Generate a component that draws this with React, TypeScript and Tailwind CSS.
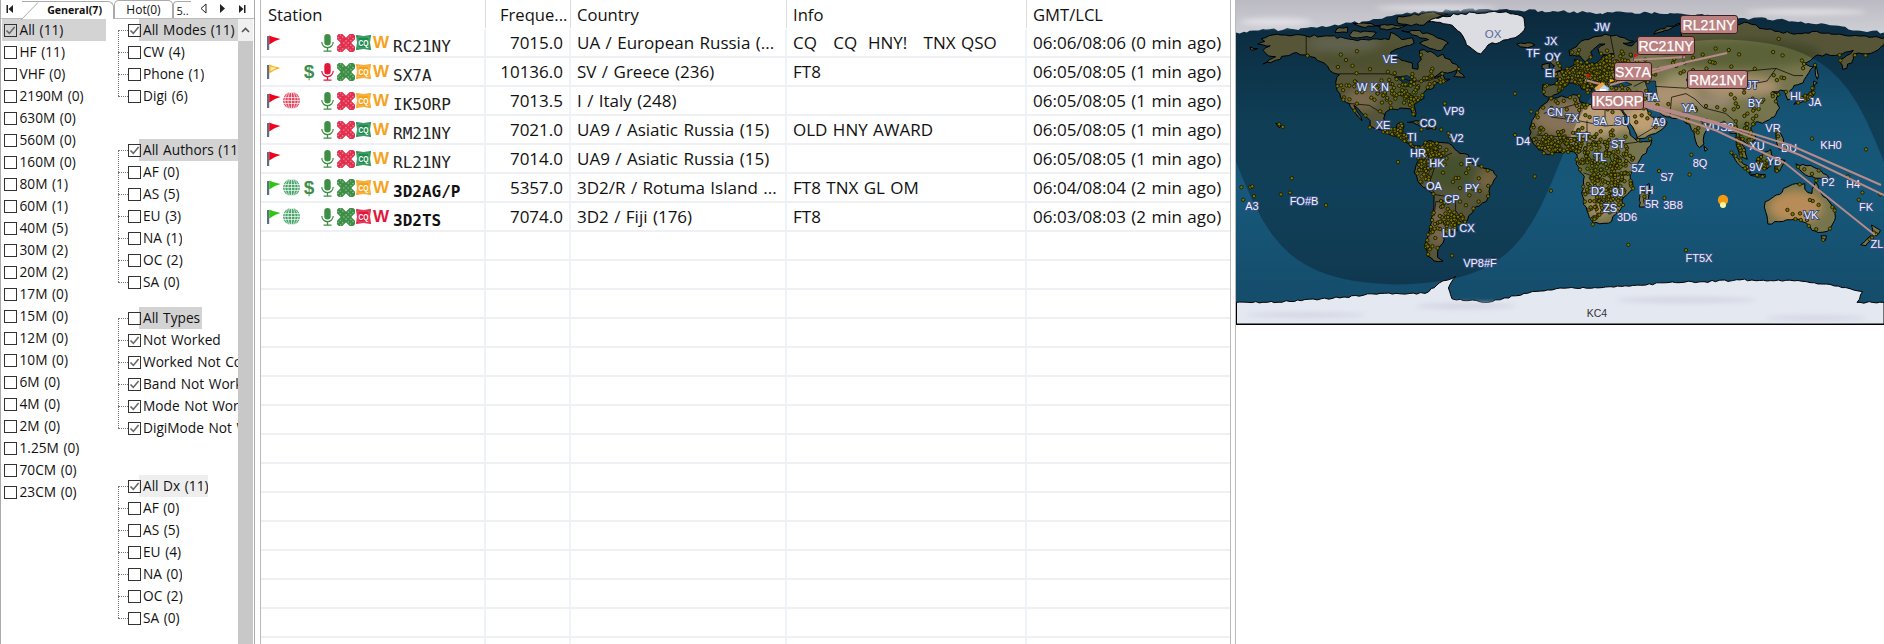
import React from "react";

type C = { l: string; n?: boolean; h?: string };

function Box({ on }: { on?: boolean }) {
  return (
    <span className="relative z-10 flex h-[13px] w-[13px] shrink-0 items-center justify-center border border-[#333]">
      {on && (
        <svg width="11" height="11" viewBox="0 0 11 11">
          <path d="M1.5 5.5 L4.3 8.4 L9.6 2" fill="none" stroke="#666" strokeWidth="1.6" />
        </svg>
      )}
    </span>
  );
}

const bands = ["HF (11)", "VHF (0)", "2190M (0)", "630M (0)", "560M (0)", "160M (0)", "80M (1)", "60M (1)", "40M (5)", "30M (2)", "20M (2)", "17M (0)", "15M (0)", "12M (0)", "10M (0)", "6M (0)", "4M (0)", "2M (0)", "1.25M (0)", "70CM (0)", "23CM (0)"];

function Group({ items, className }: { items: C[]; className: string }) {
  return (
    <div className={"relative " + className}>
      <div className="absolute bottom-[11px] left-0 top-[11px] border-l border-dotted border-[#777]" />
      {items.map((it, i) => (
        <div key={i} className="flex h-[22px] items-center">
          <span className="w-[10px] shrink-0 border-t border-dotted border-[#777]" />
          <Box on={it.n} />
          <span className={"-ml-[2px] flex h-[22px] items-center overflow-hidden whitespace-nowrap pl-[4px] " + (it.h ?? "")}>{it.l}</span>
        </div>
      ))}
    </div>
  );
}

function LeftPanel() {
  return (
    <div className="flex h-[644px] w-[255px] shrink-0 flex-col border-x border-x-[#aaa] text-[13.7px] leading-none text-[#111] [word-spacing:1px]">
      <div className="relative flex h-[19px] shrink-0 items-end border-b border-[#bbb] text-[12px]">
        <span className="flex h-[19px] w-[21px] items-center pl-[5px] text-[#111]">
          <svg width="8" height="10" viewBox="0 0 8 10"><rect x="0.5" y="1" width="1.5" height="8" fill="#222" /><path d="M7 1 V9 L2.5 5Z" fill="#222" /></svg>
        </span>
        <div className="relative -mb-px flex h-[18px] w-[92px] items-center justify-end rounded-tr-[6px] border-r border-t border-[#aaa] bg-white pr-[11px] font-bold">
          <span className="text-[10.6px]">General(7)</span>
          <svg className="absolute -left-[1px] top-0" width="18" height="18" viewBox="0 0 18 18"><path d="M0 18 L17 0.5" stroke="#aaa" fill="none" /></svg>
        </div>
        <div className="flex h-[18px] w-[59px] items-center justify-center rounded-t-[5px] border-x border-t border-[#aaa] text-[12px]">Hot(0)</div>
        <div className="flex h-[17px] w-[18px] items-center justify-center overflow-hidden rounded-tl-[4px] border-l border-t border-[#aaa] text-[11px]">5..</div>
        <span className="ml-[9px] flex h-[19px] w-[19px] items-center">
          <svg width="7" height="11" viewBox="0 0 7 11"><path d="M6 1 V10 L1 5.5Z" fill="none" stroke="#222" /></svg>
        </span>
        <span className="flex h-[19px] w-[19px] items-center">
          <svg width="7" height="11" viewBox="0 0 7 11"><path d="M1 1 V10 L6 5.5Z" fill="#222" /></svg>
        </span>
        <span className="flex h-[19px] items-center">
          <svg width="8" height="10" viewBox="0 0 8 10"><path d="M1 1 V9 L5.5 5Z" fill="#222" /><rect x="6" y="1" width="1.5" height="8" fill="#222" /></svg>
        </span>
      </div>
      <div className="flex min-h-0 flex-1">
        <div className="w-[117px] shrink-0 pl-[1px]">
          <div className="flex h-[22px] w-[104px] items-center gap-[2.5px] bg-[#d3d3d3] pl-[2px]">
            <Box on />
            <span>All (11)</span>
          </div>
          {bands.map((b) => (
            <div key={b} className="flex h-[22px] items-center gap-[2.5px] pl-[2px]">
              <Box />
              <span>{b}</span>
            </div>
          ))}
        </div>
        <div className="w-[120px] shrink-0 overflow-hidden">
          <Group className="" items={[{ l: "All Modes (11)", n: true, h: "w-[99px] bg-[#d3d3d3]" }, { l: "CW (4)" }, { l: "Phone (1)" }, { l: "Digi (6)" }]} />
          <Group className="mt-[32px]" items={[{ l: "All Authors (11)", n: true, h: "bg-[#d3d3d3] w-[101px]" }, { l: "AF (0)" }, { l: "AS (5)" }, { l: "EU (3)" }, { l: "NA (1)" }, { l: "OC (2)" }, { l: "SA (0)" }]} />
          <Group className="mt-[14px]" items={[{ l: "All Types", h: "bg-[#d3d3d3] w-[63px]" }, { l: "Not Worked", n: true }, { l: "Worked Not Confirmed", n: true }, { l: "Band Not Worked", n: true }, { l: "Mode Not Worked", n: true }, { l: "DigiMode Not Worked", n: true }]} />
          <Group className="mt-[36px]" items={[{ l: "All Dx (11)", n: true, h: "w-[69px] bg-[#eeeeee]" }, { l: "AF (0)" }, { l: "AS (5)" }, { l: "EU (4)" }, { l: "NA (0)" }, { l: "OC (2)" }, { l: "SA (0)" }]} />
        </div>
        <div className="flex w-[15px] shrink-0 flex-col bg-[#c8c8c8]">
          <div className="flex h-[22px] items-center justify-center bg-[#f0f0f0]">
            <svg width="9" height="6" viewBox="0 0 9 6"><path d="M1 5 L4.5 1.5 L8 5" fill="none" stroke="#555" strokeWidth="1.6" /></svg>
          </div>
        </div>
      </div>
    </div>
  );
}

const RED = "#e2304f";
const GRN = "#3d8f45";
const ORG = "#f5a31f";
const CRIM = "#e0183c";

function Flag({ c }: { c: "r" | "y" | "g" }) {
  const col = c === "r" ? "#f2001c" : c === "y" ? "#fbb017" : "#2fc414";
  return (
    <svg width="14" height="15" viewBox="0 0 14 15" className="-mt-[1px]">
      <rect x="0" y="1" width="2.2" height="14" fill="#5d6f82" />
      <path d="M2.2 0.5 L6 2 L13.5 4 L8 6 L2.2 9.5Z" fill={col} />
      {c === "y" && <path d="M3.5 2.5 L9.5 4 L5 6.5 L3.5 7Z" fill="#ffeeb0" />}
    </svg>
  );
}
function Globe({ c }: { c: string }) {
  return (
    <svg width="17" height="17" viewBox="0 0 17 17">
      <circle cx="8.5" cy="8.5" r="8.5" fill={c} />
      <g stroke="#fff" strokeOpacity="0.75" strokeWidth="0.9" fill="none">
        <path d="M0 5.5 H17 M0 8.5 H17 M0 11.5 H17" />
        <ellipse cx="8.5" cy="8.5" rx="3.5" ry="8.5" />
        <path d="M8.5 0 V17" />
        <ellipse cx="8.5" cy="8.5" rx="6.6" ry="8.5" />
      </g>
    </svg>
  );
}
function Mic({ c }: { c: string }) {
  return (
    <svg width="13" height="18" viewBox="0 0 13 18">
      <rect x="3.3" y="0" width="6.4" height="11.5" rx="3.2" fill={c} />
      <path d="M0.8 8 A5.7 5.7 0 0 0 12.2 8" fill="none" stroke={c} strokeWidth="1.2" />
      <path d="M6.5 13.5 V16.5 M2.5 17.2 H10.5" stroke={c} strokeWidth="1.3" fill="none" />
    </svg>
  );
}
function Cross({ c }: { c: string }) {
  const bar = (r: number) => (
    <g transform={`rotate(${r} 9 9)`}>
      <rect x="-2.5" y="5.2" width="23" height="7.6" rx="1.5" fill={c} />
      <g fill="#fff" fillOpacity="0.5">
        {[-1, 2, 13.5, 16.5].map((x) => (
          <g key={x}>
            <rect x={x} y="6.6" width="1.2" height="1.2" />
            <rect x={x} y="10.2" width="1.2" height="1.2" />
          </g>
        ))}
      </g>
    </g>
  );
  return (
    <svg width="18" height="18" viewBox="0 0 18 18">
      {bar(45)}
      {bar(-45)}
      <g fill="#fff" fillOpacity="0.5">
        <rect x="8.4" y="6.2" width="1.2" height="1.2" />
        <rect x="8.4" y="10.6" width="1.2" height="1.2" />
        <rect x="6.2" y="8.4" width="1.2" height="1.2" />
        <rect x="10.6" y="8.4" width="1.2" height="1.2" />
      </g>
    </svg>
  );
}
function Cq({ c }: { c: string }) {
  return (
    <svg width="15" height="15" viewBox="0 0 15 15">
      <path d="M0 0 L7.5 1 L15 0 L14 7.5 L15 15 L7.5 14 L0 15 L1 7.5Z" fill={c} />
      <rect x="2" y="2" width="11" height="11" fill={c} stroke="#fff" strokeOpacity="0.45" strokeWidth="0.6" />
      <text x="7.5" y="11" textAnchor="middle" fontSize="9" fontWeight="700" fill="#fff" fontFamily="'Liberation Sans',sans-serif" textLength="10" lengthAdjust="spacingAndGlyphs">CQ</text>
    </svg>
  );
}

type Row = { flag: "r" | "y" | "g"; globe?: string; dollar?: boolean; mic: string; x: string; cq: string; w: string; call: string; bold?: boolean; f: string; country: string; info: string; t: string };
const DARKG = "#1e8a4c";
const rows: Row[] = [
  { flag: "r", mic: GRN, x: RED, cq: DARKG, w: ORG, call: "RC21NY", f: "7015.0", country: "UA / European Russia (...", info: "CQ   CQ  HNY!   TNX QSO", t: "06:06/08:06 (0 min ago)" },
  { flag: "y", dollar: true, mic: CRIM, x: GRN, cq: ORG, w: ORG, call: "SX7A", f: "10136.0", country: "SV / Greece (236)", info: "FT8", t: "06:05/08:05 (1 min ago)" },
  { flag: "r", globe: "#e24a62", mic: GRN, x: RED, cq: ORG, w: ORG, call: "IK5ORP", f: "7013.5", country: "I / Italy (248)", info: "", t: "06:05/08:05 (1 min ago)" },
  { flag: "r", mic: GRN, x: RED, cq: DARKG, w: ORG, call: "RM21NY", f: "7021.0", country: "UA9 / Asiatic Russia (15)", info: "OLD HNY AWARD", t: "06:05/08:05 (1 min ago)" },
  { flag: "r", mic: GRN, x: RED, cq: DARKG, w: ORG, call: "RL21NY", f: "7014.0", country: "UA9 / Asiatic Russia (15)", info: "", t: "06:05/08:05 (1 min ago)" },
  { flag: "g", globe: "#4aa56b", dollar: true, mic: GRN, x: GRN, cq: ORG, w: ORG, call: "3D2AG/P", bold: true, f: "5357.0", country: "3D2/R / Rotuma Island ...", info: "FT8 TNX GL OM", t: "06:04/08:04 (2 min ago)" },
  { flag: "g", globe: "#4aa56b", mic: GRN, x: GRN, cq: CRIM, w: CRIM, call: "3D2TS", bold: true, f: "7074.0", country: "3D2 / Fiji (176)", info: "FT8", t: "06:03/08:03 (2 min ago)" },
];

const cs = "shrink-0 overflow-hidden whitespace-nowrap border-r-2 border-[#eef3fa] flex items-center";
const hs = "shrink-0 flex h-[28px] items-center border-r border-[#dcdcdc] whitespace-nowrap pt-[2px]";

function Table() {
  const empties = Array.from({ length: 15 });
  return (
    <div className="h-[644px] w-[971px] shrink-0 overflow-hidden border-x border-[#bbb] text-[17px] leading-none text-[#111] [word-spacing:1px]">
      <div className="flex h-[29px] text-[16.6px]">
        <div className={hs + " w-[225px] pl-[7px]"}>Station</div>
        <div className={hs + " w-[85px] pl-[14px]"}>Freque...</div>
        <div className={hs + " w-[216px] pl-[6px]"}>Country</div>
        <div className={hs + " w-[240px] pl-[6px]"}>Info</div>
        <div className="flex h-[28px] w-[202px] items-center pl-[6px] pt-[2px]">GMT/LCL</div>
      </div>
      {rows.map((r) => (
        <div key={r.call} className="flex h-[29px] border-b-2 border-[#eef0f3]">
          <div className={cs + " w-[225px] pl-[6px]"}>
            <span className="flex w-[15px] shrink-0 justify-start"><Flag c={r.flag} /></span>
            <span className="flex w-[18px] shrink-0 justify-center">{r.globe && <Globe c={r.globe} />}</span>
            <span className="flex w-[18px] shrink-0 justify-center font-['Liberation_Sans'] text-[19px] font-bold text-[#3f8f4a]">{r.dollar && "$"}</span>
            <span className="flex w-[18px] shrink-0 justify-center"><Mic c={r.mic} /></span>
            <span className="flex w-[19px] shrink-0 justify-center"><Cross c={r.x} /></span>
            <span className="flex w-[17px] shrink-0 justify-center"><Cq c={r.cq} /></span>
            <span className="flex w-[18px] shrink-0 justify-center font-['Liberation_Sans'] text-[17px] font-bold" style={{ color: r.w }}>W</span>
            <span className={"ml-[3px] mt-[8px] font-['DejaVu_Sans_Mono'] text-[16px] " + (r.bold ? "font-bold" : "font-normal text-[#222]")}>{r.call}</span>
          </div>
          <div className={cs + " w-[85px] justify-end pr-[6px]"}>{r.f}</div>
          <div className={cs + " w-[216px] pl-[6px]"}>{r.country}</div>
          <div className={cs + " w-[240px] whitespace-pre pl-[6px]"}>{r.info}</div>
          <div className="flex w-[202px] items-center pl-[6px]">{r.t}</div>
        </div>
      ))}
      {empties.map((_, i) => (
        <div key={i} className="flex h-[29px] border-b-2 border-[#eef0f3]">
          <div className={cs + " w-[225px]"} />
          <div className={cs + " w-[85px]"} />
          <div className={cs + " w-[216px]"} />
          <div className={cs + " w-[240px]"} />
        </div>
      ))}
    </div>
  );
}

/* ---------- Map ---------- */
type LL = [number, number];
const X = (lon: number) => (lon + 180) * 1.8;
const Y = (lat: number) => 162 - lat * 1.8;
const path = (p: LL[], close = true) => "M" + p.map(([a, b]) => X(a).toFixed(1) + " " + Y(b).toFixed(1)).join("L") + (close ? "Z" : "");

function rng(seed: number) {
  let s = seed;
  return () => {
    s = (s + 0x6d2b79f5) | 0;
    let t = Math.imul(s ^ (s >>> 15), 1 | s);
    t = (t + Math.imul(t ^ (t >>> 7), 61 | t)) ^ t;
    return ((t ^ (t >>> 14)) >>> 0) / 4294967296;
  };
}

const land: LL[][] = [
  [[-168,65.5],[-164,67],[-166,68.5],[-157,71],[-141,70],[-128,70],[-115,68],[-108,68],[-95,68],[-94,72],[-88,68],[-82,69],[-81,66],[-87,64],[-94,61],[-94,58.5],[-88,56.5],[-82,55],[-82,52],[-79,51.5],[-79,55],[-77,57],[-78,62],[-72,61.5],[-68,58.5],[-65,60],[-60,55],[-56,52],[-60,50],[-66,50],[-70,47],[-65,48.5],[-64,46],[-61,46],[-66,44],[-70,43.5],[-70,41.5],[-74,40.5],[-76,38],[-75.5,35.5],[-78,34],[-81,32],[-80,27],[-80.5,25],[-82,27],[-83,29.5],[-85,29.7],[-89,30],[-90,29],[-94,29.5],[-97,27.5],[-97.5,22],[-95,18.5],[-91,18.5],[-90.5,21],[-87,21.5],[-88,16],[-83.5,15],[-83.5,11],[-81,9],[-78,9],[-77.5,7.5],[-80,7.5],[-83,8.5],[-86,11],[-88,13],[-92,14.5],[-96,16],[-102,18],[-105.5,20],[-105.5,23],[-109,26],[-112.5,30],[-114.5,31.5],[-112,27],[-110,23],[-112,25],[-115,29],[-117,32.5],[-120.5,34.5],[-124,40],[-124,47],[-122.5,48.5],[-128,51],[-131,55],[-136,58],[-140,60],[-148,60.5],[-152,59],[-158,56.5],[-165,54.5],[-158,58.5],[-162,59],[-165,62],[-161,64.5]],
  [[-80,73],[-72,71],[-62,66],[-66,62],[-74,64],[-78,66],[-73,68],[-88,73]],
  [[-117,70],[-105,69],[-102,72],[-115,73]],
  [[-90,77],[-78,76],[-62,82],[-72,83],[-90,81]],
  [[-125,72],[-118,72],[-118,75],[-124,74]],
  [[-100,74],[-90,74],[-85,76],[-100,76]],
  [[-110,75],[-100,75.5],[-105,77],[-115,77]],
  [[-57,51.5],[-53,47],[-59,47.5]],
  [[-24,65.5],[-18,66.3],[-14,65],[-18,63.5],[-22,64]],
  [[-85,22],[-80,23],[-74.5,20],[-78,20],[-82,22]],
  [[-74,19.5],[-69,19.5],[-69,18.2],[-74,18.2]],
  [[-77.5,7.5],[-75,11],[-72,12],[-68,11],[-62,10.5],[-57,6],[-51,4],[-50,0],[-44,-2.5],[-37,-5],[-35,-8],[-39,-14],[-39,-18],[-41,-22],[-48,-26],[-48.5,-28],[-53,-34],[-58,-34.5],[-57,-38],[-62,-39],[-65,-41],[-65,-45],[-68,-50],[-68,-53],[-65,-55],[-70,-55],[-74,-52],[-75,-46],[-73,-40],[-71,-30],[-70,-18],[-76,-14],[-81,-6],[-80,-2],[-78,2]],
  [[-6,35.5],[10,37],[11,33.5],[20,31],[25,32],[32,31],[34.5,28],[37,21],[39,15],[43,11.5],[51,12],[48,5],[41,-2],[39,-7],[40.5,-15],[35,-20],[35,-24],[32.5,-28],[27,-34],[18.5,-34],[15,-27],[12,-17],[13.5,-8],[9,-1],[9.5,4],[5,6],[-4,5],[-8,4.5],[-13,8.5],[-17,14.5],[-16,21],[-13,27.5],[-9,32]],
  [[49.5,-12],[50.5,-16],[47,-25],[44,-25],[44,-17]],
  [[-9,37],[-9.5,43],[-2,43.5],[-1,46],[-4.5,48.5],[1.5,50.5],[4,52],[8,54],[8,57],[11,56],[11,54],[20,54.5],[24,59],[30,60],[22,60],[21,63],[25,65.5],[22,65.5],[17,61],[18,59],[14,55.5],[11,59],[5.5,59],[5,62],[14,68],[25,71],[33,69.5],[41,67],[35,66],[40,64.5],[44,68],[55,68.5],[68,68.5],[67,72.5],[73,72],[80,73],[87,75],[104,77.5],[113,74],[130,71],[140,72.5],[160,70],[170,70],[180,69],[180,65],[177,62.5],[170,60],[163,60],[162,55],[157,51.5],[155.5,57],[163,62],[155,59.5],[143,59.5],[135,54.5],[141,53],[135,44],[130,42.5],[127.5,39.5],[129.5,36],[126.5,34.5],[125,39.5],[121,39],[118,39],[122,37],[120,34],[122,30],[119,25],[114,22.5],[108,21.5],[106,19],[109,13],[105,9],[100,13.5],[103,5],[104,1.5],[100.5,3],[98,9],[98,16],[94.5,16],[92,21.5],[87,21.5],[80,15],[80,10],[77.5,8],[73,18],[72,21],[67,24.5],[61,25],[57,26],[51,30],[48,30],[51,25],[56,25],[59.5,22],[55,17],[45,13],[43,13],[39,21],[35,28],[35,36],[27,36.5],[26,40],[23,40],[23,36.5],[20,40],[13,45.5],[18,40],[15.5,38],[9,44],[3,43],[-1,38],[-5,36]],
  [[-5,50],[1,51],[0,54],[-3,58.5],[-6,56],[-3,53.5]],
  [[-10,52],[-6,52],[-6,55],[-10,54]],
  [[130,32],[136,34],[141,37],[141,41],[143,44],[141,45],[139,38],[132,35]],
  [[95,5.5],[104,-2],[106,-6],[101,-3]],
  [[105,-6.5],[114,-7],[114,-8.5],[106,-7.5]],
  [[109,1],[117,7],[118,1],[115,-4],[110,-3]],
  [[119,1],[125,1],[122,-5],[120,-5]],
  [[131,-1],[141,-3],[148,-7],[150,-10],[142,-9],[138,-8],[133,-4]],
  [[120,18],[122,18],[124,13],[126,7],[122,7],[120,14]],
  [[80,9],[82,7],[80.5,6]],
  [[114,-22],[122,-18],[126,-14],[131,-12],[136,-12],[136,-15],[140,-17.5],[142,-11],[146,-19],[153,-26],[153,-31],[150,-37],[146,-39],[140,-38],[137,-34],[131,-31.5],[124,-33],[115.5,-34.5],[115,-30],[113.5,-25]],
  [[145,-41],[148,-41],[147.5,-43.5],[146,-43.5]],
  [[173,-35],[178,-38],[175,-41],[174,-39]],
  [[172.5,-41],[174,-42],[170,-46.5],[167,-46]],
  [[52,71],[56,74],[68,77],[58,73]],
  [[142,54],[143,50],[143,46],[142,48]],
  [[-158,21.5],[-155,20],[-156,19]],
  [[-172,64],[-168,63],[-172,62.5]],
];
const rough = (p: LL[], seed: number, close = true, amp = 0.7): LL[] => {
  const r = rng(seed);
  const out: LL[] = [];
  const n = close ? p.length : p.length - 1;
  for (let i = 0; i < n; i++) {
    const [a, b] = p[i];
    const [c, d] = p[(i + 1) % p.length];
    const steps = Math.max(1, Math.round(Math.hypot(c - a, d - b) / 2.2));
    for (let k = 0; k < steps; k++) {
      const t = k / steps;
      const j = k === 0 ? 0 : amp;
      out.push([a + (c - a) * t + (r() - 0.5) * 2 * j, b + (d - b) * t + (r() - 0.5) * 2 * j]);
    }
  }
  return out;
};
const landD = land.map((l, i) => path(rough(l, i + 11))).join(" ");
const water: LL[][] = [
  [[28,42],[33,46],[40,43],[35,41.5]],
  [[47,45],[53,45],[54,37],[50,37]],
  [[-92,47],[-85,48],[-80,45],[-83,42],[-87,42],[-88,45]],
];
const greenland: LL[] = [[-73,78],[-60,76],[-54,70],[-52,65],[-44,60],[-40,65],[-25,69],[-20,73],[-20,80],[-30,83.5],[-55,82.5],[-65,81]];
const antarctica: LL[] = [[-180,-78],[-150,-77.5],[-120,-75],[-100,-73],[-75,-73],[-65,-66],[-58,-63.5],[-62,-70],[-60,-76],[-40,-78],[-20,-73],[0,-70],[30,-69.5],[60,-67],[80,-66.5],[100,-65.5],[130,-66],[150,-68],[168,-72],[165,-78],[180,-78]];
const antD = path([...rough(antarctica, 5, false, 0.5), [180, -78], [180, -90], [-180, -90]]);
const grD = path(rough(greenland, 9));
const northIce: LL[] = [[-180,72],[-170,73],[-150,74],[-130,75],[-110,78],[-95,81],[-70,84],[-40,85],[-10,84],[15,83],[40,83],[70,82],[100,80],[125,79],[150,76],[165,73],[180,72]];
const northD = path([...rough(northIce, 3, false, 0.9), [180, 72], [180, 92], [-180, 92]]);
const borders: LL[][] = [
  [[-141,70],[-141,60]],[[-123,49],[-95,49],[-83,45],[-75,45],[-67,47]],[[-117,32.5],[-106,31.5],[-97,26]],[[-92,14.5],[-91,18]],
  [[-70,-18],[-58,-20],[-58,-27],[-53,-34]],[[-70,-18],[-72,-10],[-70,-4],[-72,1],[-67,2],[-60,5]],[[-70,-30],[-69,-22],[-67,-22],[-58,-20]],
  [[-9,27],[12,33]],[[12,33],[10,23],[25,20],[25,32]],[[25,20],[37,21]],[[-5,25],[10,23]],[[-13,15],[15,13],[25,10],[35,10],[43,11]],[[15,13],[15,23]],[[9,4],[15,8],[15,13]],[[25,10],[30,-3],[30,-12],[35,-20]],[[13,-6],[30,-12]],[[12,-17],[25,-18],[33,-25]],[[20,-18],[20,-28]],[[33,4],[41,-2]],
  [[28,70],[30,60],[28,56],[24,52],[30,46]],[[41,42],[47,45]],[[53,42],[70,41],[80,45],[87,49],[120,52],[130,48],[135,48]],[[87,49],[100,42],[115,45],[120,52]],[[61,25],[62,36],[70,38],[75,35],[80,30],[92,27],[98,22],[100,13]],[[45,37],[48,30]],[[36,33],[45,37]],[[35,30],[48,30]],[[42,13],[52,19],[56,25]],
];
const tans: [number, number, number, number, string][] = [
  [12,24,28,11,"#b89d76"],[46,24,10,9,"#c09f74"],[62,37,16,7,"#ab9270"],[100,42,22,6,"#ab9270"],[85,33,11,4,"#988770"],[131,-25,15,9,"#b88c58"],[-110,35,9,6,"#a8926a"],[-68,-35,5,12,"#a88e6c"],[22,-25,7,6,"#a88d62"],[72,46,14,4,"#98916a"],[-40,-10,6,6,"#a08a5a"],[-100,40,9,4,"#8f8a5c"],
  [-60,-6,14,9,"#5f6e3c"],[22,-1,11,6,"#4d6030"],[105,14,9,8,"#50642f"],[115,0,14,5,"#4b6432"],[-85,38,9,6,"#657644"],[-105,58,30,8,"#6c7042"],[100,60,45,8,"#5c6238"],[15,52,12,5,"#66703f"],[-120,66,20,5,"#84866a"],
];
const inPoly = (p: LL, poly: LL[]) => {
  let c = false;
  for (let i = 0, j = poly.length - 1; i < poly.length; j = i++) {
    const [xi, yi] = poly[i];
    const [xj, yj] = poly[j];
    if (yi > p[1] !== yj > p[1] && p[0] < ((xj - xi) * (p[1] - yi)) / (yj - yi) + xi) c = !c;
  }
  return c;
};
const clusters: [number, number, number, number, number][] = [
  [15,48,11,6,300],[0,9,11,5,120],[20,0,10,9,130],[33,-5,5,9,70],[25,-24,6,6,70],[8,30,14,5,20],[45,30,8,6,30],[60,56,22,5,30],[110,55,25,7,18],[-82,38,7,5,60],[-117,38,5,6,15],[-98,38,8,5,25],[-105,52,18,5,10],[-88,15,5,3,50],[-72,5,4,4,90],[-50,-12,8,8,20],[-75,-8,3,6,35],[-62,-33,4,6,45],[-58,-33,2,1.5,20],[105,12,8,6,40],[78,22,5,6,18],[110,32,10,6,25],[115,-4,12,4,35],[138,37,3,3,12],[135,-28,13,7,14],[47,-18,2,4,8],[172,-40,3,3,5],[-70,45,5,3,15],[-72,-38,1.5,7,20],
];
const freeDots: LL[] = [[-78,22],[-73,20],[-70,19],[-66,18],[-62,16],[-61,14],[-60,12],[-76,24],[-64,32.5],[-77,18],[-156,21],[-154,19.5],[-177,-14],[-172,-14],[-171,-13.5],[-170,-19],[-176,-21],[-155,-18],[-150,-17],[-130,-24],[-149,-9],[-90,0],[-25,15],[-16,28],[-25,38],[-9,39],[-14,-8],[-5,-16],[58,-20],[55,-5],[73,4],[72,-7],[140,13],[170,7],[160,-8],[168,-17],[178,-18],[166,-21],[-60,-52],[-37,-54],[70,-49],[38,-46]];
const dots: LL[] = (() => {
  const r = rng(7);
  const out: LL[] = [...freeDots];
  const gauss = () => (r() + r() + r() - 1.5) / 0.5;
  for (const [lo, la, sa, sb, n] of clusters) {
    for (let i = 0, tries = 0; i < n && tries < n * 8; tries++) {
      const p: LL = [lo + gauss() * sa, la + gauss() * sb];
      if (land.some((l) => inPoly(p, l))) {
        out.push(p);
        i++;
      }
    }
  }
  for (const l of land) {
    if (l.length < 10) continue;
    for (let k = 0; k < l.length; k++) {
      if (r() < 0.22) {
        const [a, b] = l[k];
        if (b > 60) continue;
        out.push([a + (r() - 0.5) * 2, b + (r() - 0.5) * 2]);
      }
    }
  }
  return out;
})();
const night = (() => {
  const pts: LL[] = [];
  for (let lon = -180; lon <= 180; lon += 5) {
    const d = Math.cos(((lon - 90) * Math.PI) / 180);
    pts.push([lon, (Math.atan(-d / Math.tan((-22 * Math.PI) / 180)) * 180) / Math.PI]);
  }
  pts.push([180, 90], [-180, 90]);
  return path(pts);
})();

const labels: [string, number, number][] = [
  ["JX",1551,41],["TF",1533,53],["OY",1553,57],["EI",1550,73],["VE",1390,59],["W K N",1373,87],["VP9",1454,111],["XE",1383,125],["CO",1428,123],["V2",1457,138],["D4",1523,141],["HK",1437,163],["FY",1472,162],["PY",1472,188],["OA",1434,186],["CP",1452,199],["LU",1449,233],["CX",1467,228],["A3",1252,206],["FO#B",1304,201],["VP8#F",1480,263],["CN",1555,112],["TI",1412,137],["HR",1418,153],
  ["JW",1602,27],["5A",1600,121],["SU",1622,121],["A9",1659,122],["7X",1572,118],["TT",1583,137],["ST",1618,144],["TL",1600,157],["5Z",1638,168],["S7",1667,177],["8Q",1700,163],["D2",1598,191],["9J",1618,192],["5R",1652,204],["3B8",1673,205],["FH",1646,190],["ZS",1610,208],["3D6",1627,217],["FT5X",1699,258],["VK",1811,215],["ZL",1877,244],["FK",1866,207],["H4",1853,184],["P2",1828,182],["KH0",1831,145],["DU",1789,148],["VR",1773,128],["XU",1757,146],["YB",1774,161],["9V",1756,167],["VU",1712,127],["S2",1727,127],["JA",1815,102],["BY",1755,103],["JT",1752,85],["HL",1797,96],["TA",1652,97],["YA",1689,108],
];
const tags: [string, number, number, number][] = [
  ["RL21NY",1680,15,57],["RC21NY",1637,36,57],["SX7A",1614,62,37],["RM21NY",1687,70,60],["IK5ORP",1591,91,52],
];
const lines: [number, number][][] = [
  [[1643,103],[1715,122],[1790,145],[1881,185]],
  [[1643,105],[1720,125],[1800,155],[1884,195]],
  [[1643,106],[1715,130],[1785,163],[1875,235]],
  [[1633,60],[1685,57]],
  [[1651,70],[1727,53]],
  [[1610,85],[1685,63]],
  [[1600,84],[1585,80]],
];

function SmallFlag({ x, y, c }: { x: number; y: number; c: string }) {
  return (
    <g transform={`translate(${x - 1236} ${y})`}>
      <rect x="0" y="0" width="1" height="7" fill="#456" />
      <path d="M1 0 L5.5 1.5 L1 3.5Z" fill={c} />
    </g>
  );
}

function WorldMap() {
  return (
    <svg width="648" height="325" viewBox="0 0 648 325" className="block shrink-0">
      <defs>
        <linearGradient id="sea" x1="0" y1="0" x2="0" y2="1">
          <stop offset="0" stopColor="#103650" />
          <stop offset="0.35" stopColor="#155474" />
          <stop offset="0.6" stopColor="#17587a" />
          <stop offset="0.9" stopColor="#154d6c" />
        </linearGradient>
        <linearGradient id="north" x1="0" y1="0" x2="0" y2="1">
          <stop offset="0" stopColor="#b9b8c0" />
          <stop offset="1" stopColor="#cfcfd6" />
        </linearGradient>
        <filter id="bl" x="-30%" y="-30%" width="160%" height="160%"><feGaussianBlur stdDeviation="4" /></filter>
        <filter id="bl2" x="-30%" y="-100%" width="160%" height="300%"><feGaussianBlur stdDeviation="2.5" /></filter>
        <clipPath id="landclip"><path d={landD} /></clipPath>
      </defs>
      <rect width="648" height="325" fill="url(#sea)" />
      <path d={landD} fill="#76754d" />
      <g clipPath="url(#landclip)">
        <g filter="url(#bl)">
          {tans.map(([a, b, rx, ry, c], i) => (
            <ellipse key={i} cx={X(a)} cy={Y(b)} rx={rx * 1.8} ry={ry * 1.8} fill={c} />
          ))}
        </g>
      </g>
      {water.map((w, i) => <path key={i} d={path(w)} fill="#144a68" stroke="#000" strokeWidth="0.6" />)}
      <path d={landD} fill="none" stroke="#000" strokeWidth="1" />
      {borders.map((b, i) => <path key={i} d={path(b, false)} fill="none" stroke="#000" strokeWidth="0.7" />)}
      <path d={night} fill="#000" fillOpacity="0.27" />
      <path d={northD} fill="url(#north)" />
      <g filter="url(#bl2)" fill="#dfdfe4">
        <ellipse cx="40" cy="22" rx="36" ry="4" /><ellipse cx="200" cy="8" rx="60" ry="2.5" /><ellipse cx="570" cy="12" rx="60" ry="3" />
      </g>
      <path d={grD} fill="#dcdce3" stroke="#000" strokeWidth="1" />
      <path d={antD} fill="#e4e8f1" stroke="#000" strokeWidth="1" />
      <g filter="url(#bl2)" fill="#d3d6e1">
        <ellipse cx="70" cy="315" rx="60" ry="2.5" /><ellipse cx="230" cy="306" rx="50" ry="3" /><ellipse cx="450" cy="300" rx="70" ry="3" /><ellipse cx="580" cy="318" rx="50" ry="2.5" />
      </g>
      <path d="M0.5 303 V324.5 H648" fill="none" stroke="#000" strokeWidth="1" />
      <g fill="#7a7600" stroke="#111100" strokeWidth="0.8">
        {dots.map(([a, b], i) => <circle key={i} cx={X(a).toFixed(1)} cy={Y(b).toFixed(1)} r="1.7" />)}
      </g>
      <g fontFamily="'Liberation Sans',sans-serif" fontSize="11" textAnchor="middle" fill="#eef1fa" stroke="#3a4f86" strokeWidth="1.8" paintOrder="stroke">
        {labels.map(([t, x, y]) => <text key={t + x} x={x - 1236} y={y + 4}>{t}</text>)}
      </g>
      <text x={1493 - 1236} y={38} fontFamily="'Liberation Sans',sans-serif" fontSize="11.5" textAnchor="middle" fill="#5a6a9a">OX</text>
      <text x={1597 - 1236} y={317} fontFamily="'Liberation Sans',sans-serif" fontSize="10.5" textAnchor="middle" fill="#333">KC4</text>
      <g fill="none" stroke="#b98a8a" strokeWidth="2">
        {lines.map((l, i) => <polyline key={i} points={l.map(([a, b]) => `${a - 1236},${b}`).join(" ")} />)}
      </g>
      <SmallFlag x={1633} y={54} c="#f00" />
      <SmallFlag x={1676} y={48} c="#f00" />
      <SmallFlag x={1682} y={53} c="#f00" />
      <SmallFlag x={1586} y={74} c="#f00" />
      <SmallFlag x={1609} y={79} c="#fbb017" />
      <g transform={`translate(${1595 - 1236} 82)`}>
        <path d="M0 6 L7 1 L14 6 L13 14 L2 14Z" fill="#bcd8ee" stroke="#5a8ab0" strokeWidth="0.6" />
        <path d="M-1 7 L7 0 L10 2 L3 8Z" fill="#f0a040" />
        <rect x="5" y="7" width="6" height="7" fill="#fff" />
      </g>
      <g transform={`translate(${1723 - 1236} 200)`}>
        <circle cx="0" cy="0" r="5.2" fill="#f59a10" />
        <circle cx="0" cy="5" r="3" fill="#fff8a0" />
      </g>
      {tags.map(([t, x, y, w]) => (
        <g key={t}>
          <rect x={x - 1236 + 0.5} y={y + 0.5} width={w} height={18} rx="2.5" fill="#bb8080" stroke="#3a2020" />
          <text x={x - 1236 + w / 2 + 0.5} y={y + 14.5} textAnchor="middle" fontSize="14" fill="#fff" stroke="#fff" strokeWidth="0.25" fontFamily="'Liberation Sans',sans-serif">{t}</text>
        </g>
      ))}
    </svg>
  );
}

export default function App() {
  return (
    <div className="flex h-[644px] w-[1884px] overflow-hidden bg-white font-['Open_Sans','Noto_Sans',sans-serif]">
      <LeftPanel />
      <div className="w-[5px] shrink-0" />
      <Table />
      <div className="w-[5px] shrink-0 border-r border-[#bbb]" />
      <WorldMap />
    </div>
  );
}
